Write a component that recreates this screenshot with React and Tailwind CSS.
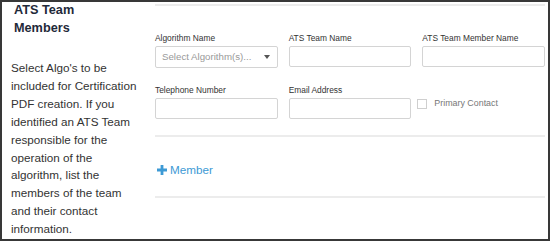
const fields = [
  { label: "Algorithm Name", type: "select" },
  { label: "ATS Team Name", type: "text" },
  { label: "ATS Team Member Name", type: "text" },
  { label: "Telephone Number", type: "text" },
  { label: "Email Address", type: "text" },
  { label: "Primary Contact", type: "checkbox" },
];

const Field = ({ field }) => {
  if (field.type === "checkbox") {
    return (
      <div className="flex items-start pt-[12px] -ml-[5px]">
        <label className="flex items-center gap-[7px] text-[8.9px] text-[#777]">
          <span className="w-[10px] h-[10px] border border-[#cfcfcf] bg-white" />
          Primary Contact
        </label>
      </div>
    );
  }

  return (
    <div className="flex flex-col">
      <label className="text-[8.4px] leading-[10px] text-[#333] mb-[3px]">
        {field.label}
      </label>
      {field.type === "select" ? (
        <div className="h-[22px] border border-[#d4d4d4] rounded-[2px] flex items-center justify-between pl-[6px] pr-[7px]">
          <span className="text-[9.7px] text-[#999]">Select Algorithm(s)...</span>
          <svg width="6" height="4" viewBox="0 0 6 4">
            <path d="M0 0h6L3 4z" fill="#555" />
          </svg>
        </div>
      ) : (
        <div className="h-[21px] border border-[#d4d4d4] rounded-[2px] bg-white" />
      )}
    </div>
  );
};

const App = () => {
  return (
    <div
      className="w-[550px] h-[241px] bg-white border-2 border-[#383838] flex overflow-hidden"
      style={{ fontFamily: '"Liberation Sans", Arial, sans-serif' }}
    >
      {/* Left description */}
      <div className="w-[153px] shrink-0 pl-[9px]">
        <h3 className="font-bold text-[12.7px] leading-[17.5px] text-[#1f2a3a] pl-[3px]">
          ATS Team
          <br />
          Members
        </h3>
        <p className="mt-[22px] w-[131px] text-[11.7px] leading-[17.9px] text-[#333]">
          Select Algo's to be included for Certification PDF creation. If you
          identified an ATS Team responsible for the operation of the
          algorithm, list the members of the team and their contact
          information.
        </p>
      </div>

      {/* Form */}
      <div className="w-[390px] pt-[2px]">
        <div className="h-[2px] bg-[#ececec]" />
        <div className="grid grid-cols-3 gap-x-[11px] gap-y-[17px] mt-[27px]">
          {fields.map((f) => (
            <Field key={f.label} field={f} />
          ))}
        </div>
        <div className="h-[2px] bg-[#ececec] mt-[16px]" />
        <div className="h-[59px] flex items-center pl-[2px] pt-[7px]">
          <button className="flex items-center gap-[3px] text-[11.7px] text-[#3d9ad5]">
            <svg width="10" height="10" viewBox="0 0 10 10">
              <path d="M3.6 0h2.8v3.6H10v2.8H6.4V10H3.6V6.4H0V3.6h3.6z" fill="#3d9ad5" />
            </svg>
            Member
          </button>
        </div>
        <div className="h-[2px] bg-[#ececec]" />
      </div>
    </div>
  );
};

export default App;
